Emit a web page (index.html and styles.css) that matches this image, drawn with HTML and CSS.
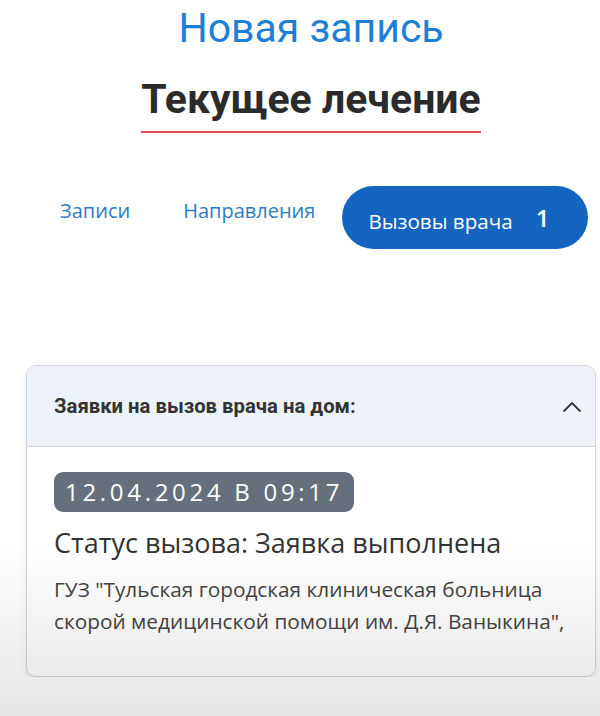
FILE: index.html
```html
<!DOCTYPE html>
<html lang="ru">
<head>
    <meta charset="UTF-8">
    <meta name="viewport" content="width=device-width, initial-scale=1.0">
    <title>Текущее лечение</title>
    <link rel="stylesheet" href="styles.css">
</head>
<body>
    <main class="page">
        <a class="new-record">Новая запись</a>

        <div class="title-wrap">
            <h1 class="title">Текущее лечение</h1>
        </div>

        <nav class="tabs">
            <a class="tab">Записи</a>
            <a class="tab">Направления</a>
            <a class="tab tab-active"><span>Вызовы врача</span><b class="tab-count">1</b></a>
        </nav>

        <section class="card">
            <header class="card-head">
                <h2 class="card-title">Заявки на вызов врача на дом:</h2>
                <svg class="chevron" width="20" height="12" viewBox="0 0 20 12">
                    <path d="M1.5 10.5 L10 2 L18.5 10.5" fill="none" stroke="#333" stroke-width="1.8"/>
                </svg>
            </header>
            <div class="card-body">
                <span class="date">12.04.2024 В 09:17</span>
                <p class="status">Статус вызова: Заявка выполнена</p>
                <p class="org">ГУЗ "Тульская городская клиническая больница скорой медицинской помощи им. Д.Я. Ваныкина",</p>
            </div>
        </section>
    </main>
</body>
</html>
```

FILE: styles.css
```css
html{
    box-sizing: border-box;
    font-family: "Open Sans", "Noto Sans", sans-serif;
}

*,
*::after,
*::before{
    box-sizing: border-box;
}

body{
    margin: 0;
    background: #fff;
    color: #333;
}

/* серая тень снизу экрана */
body::after{
    content: "";
    position: fixed;
    left: 0;
    right: 0;
    bottom: 0;
    height: 170px;
    background: linear-gradient(rgba(0,0,0,0), rgba(0,0,0,.1));
    pointer-events: none;
}

.page{
    padding: 0 4px 0 26px;
    display: flex;
    flex-direction: column;
}

.new-record{
    align-self: center;
    margin-top: 4px;
    font-family: Roboto, sans-serif;
    font-size: 41px;
    line-height: 48px;
    color: #1e7fd6;
}

.title-wrap{
    text-align: center;
    margin-top: 24px;
}
.title{
    display: inline-block;
    margin: 0;
    padding-bottom: 9px;
    font-family: Roboto, sans-serif;
    font-weight: 700;
    font-size: 41px;
    line-height: 46px;
    color: #2b2b2b;
    border-bottom: 2px solid #e2504c;
}

.tabs{
    display: flex;
    align-items: flex-start;
    margin-top: 53px;
    padding-left: 34px;
}
.tab{
    margin-top: 12px;
    margin-right: 53px;
    font-size: 20px;
    line-height: 26px;
    color: #2d7bc4;
    white-space: nowrap;
}
.tab:nth-child(2){
    margin-right: 27px;
}
.tab-active{
    margin: 0;
    flex-shrink: 0;
    display: flex;
    align-items: center;
    height: 63px;
    padding: 6px 39px 0 26px;
    border-radius: 32px;
    background: #1565c0;
    color: #fff;
    font-size: 20.6px;
}
.tab-count{
    margin-left: 23px;
    font-size: 24px;
    font-weight: 600;
    margin-top: -6px;
}

.card{
    margin-top: 116px;
    border: 1px solid #d3d6da;
    border-radius: 10px;
    overflow: hidden;
    box-shadow: 0 2px 6px rgba(0,0,0,.08);
}
.card-head{
    display: flex;
    align-items: center;
    justify-content: space-between;
    height: 81px;
    padding: 0 13px 0 27px;
    background: #eef3fa;
    border-bottom: 1px solid #d3d6da;
}
.card-title{
    margin: 0;
    font-family: Roboto, sans-serif;
    font-size: 20.3px;
    font-weight: 700;
    color: #333;
}
.chevron{
    margin-top: 2px;
}

.card-body{
    padding: 25px 10px 39px 27px;
    background: #fff;
}
.date{
    display: inline-block;
    height: 40px;
    padding: 0 11px;
    border-radius: 9px;
    background: #65707c;
    color: #fff;
    font-size: 24px;
    line-height: 40px;
    letter-spacing: 3.7px;
}
.status{
    margin: 14px 0 0;
    font-size: 27px;
    line-height: 34px;
    color: #333;
}
.org{
    margin: 13px 0 0;
    font-size: 20.8px;
    line-height: 32px;
    color: #444;
}
```
